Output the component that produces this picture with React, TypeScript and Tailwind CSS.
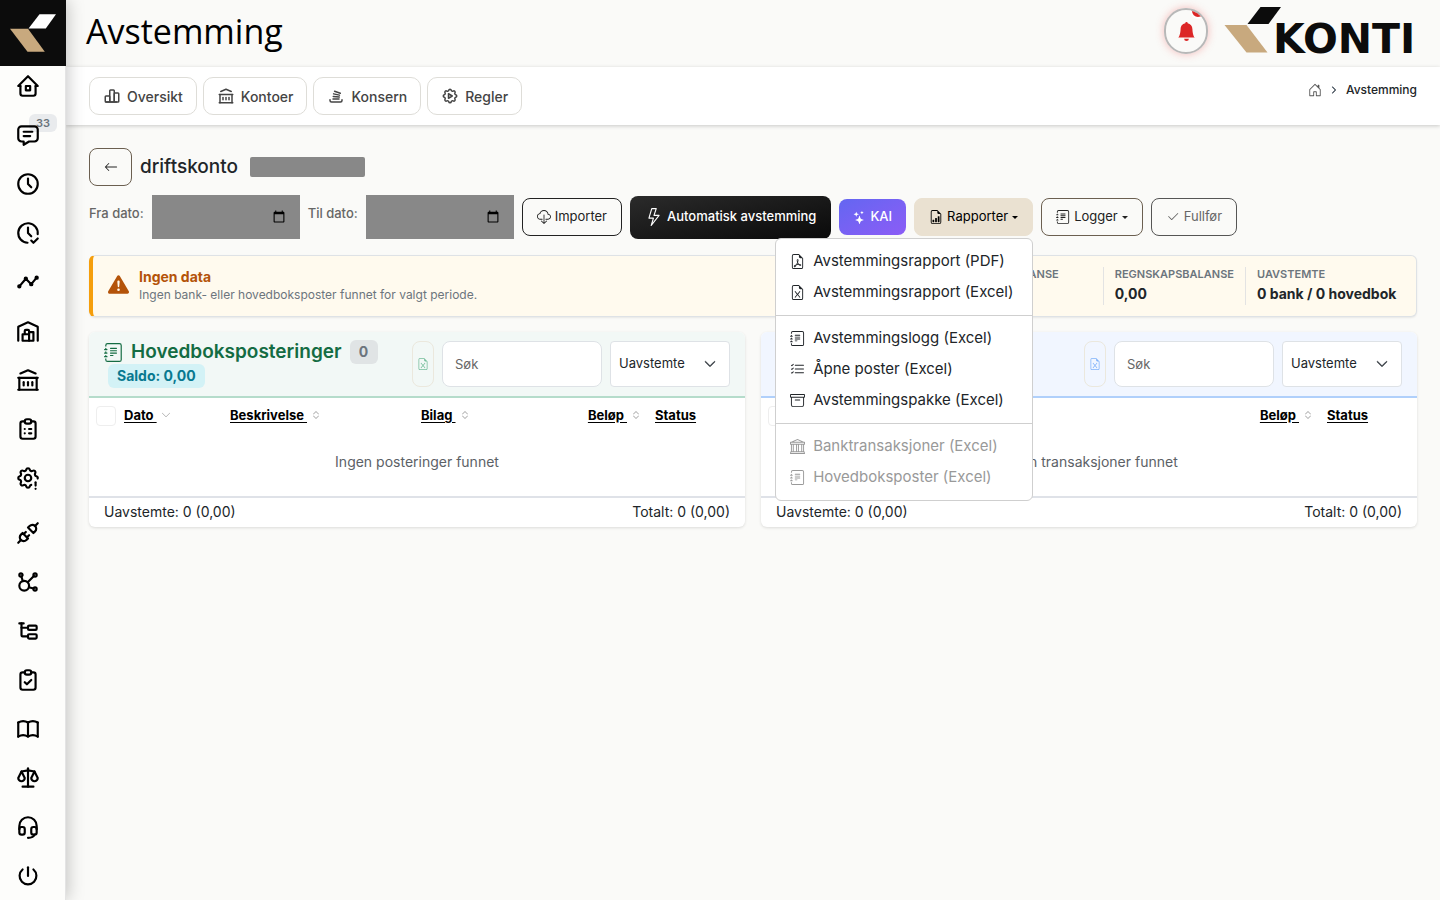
import type { ReactNode } from "react";
import type { IconType } from "react-icons";
import {
  BsArchive,
  BsArrowLeft,
  BsBank,
  BsBellFill,
  BsCheck2,
  BsChevronDown,
  BsChevronExpand,
  BsCloudDownload,
  BsExclamationTriangleFill,
  BsFileEarmarkBarGraph,
  BsFileEarmarkExcel,
  BsFileEarmarkPdf,
  BsHouseDoor,
  BsJournalText,
  BsLightning,
  BsListCheck,
  BsStars,
} from "react-icons/bs";
import {
  TbAffiliate,
  TbBook,
  TbBrandStackoverflow,
  TbBuildingBank,
  TbBuildingWarehouse,
  TbChartBar,
  TbClipboardCheck,
  TbClipboardList,
  TbClock,
  TbClockCheck,
  TbHeadset,
  TbHome2,
  TbMessage,
  TbPlugConnected,
  TbPower,
  TbScale,
  TbSettingsAutomation,
  TbSettingsExclamation,
  TbSubtask,
  TbTimeline,
} from "react-icons/tb";

interface NavItem {
  label: string;
  icon: IconType;
  badge?: number;
}

const mainNav: NavItem[] = [
  { label: "Hjem", icon: TbHome2 },
  { label: "Meldinger", icon: TbMessage, badge: 33 },
  { label: "Timer", icon: TbClock },
  { label: "Godkjenning", icon: TbClockCheck },
  { label: "Tidslinje", icon: TbTimeline },
  { label: "Lager", icon: TbBuildingWarehouse },
  { label: "Bank", icon: TbBuildingBank },
  { label: "Oppgaver", icon: TbClipboardList },
  { label: "Innstillinger", icon: TbSettingsExclamation },
];

const toolNav: NavItem[] = [
  { label: "Integrasjoner", icon: TbPlugConnected },
  { label: "Nettverk", icon: TbAffiliate },
  { label: "Struktur", icon: TbSubtask },
  { label: "Kontroll", icon: TbClipboardCheck },
  { label: "Bok", icon: TbBook },
  { label: "Juridisk", icon: TbScale },
  { label: "Support", icon: TbHeadset },
  { label: "Logg ut", icon: TbPower },
];

const tabs: NavItem[] = [
  { label: "Oversikt", icon: TbChartBar },
  { label: "Kontoer", icon: TbBuildingBank },
  { label: "Konsern", icon: TbBrandStackoverflow },
  { label: "Regler", icon: TbSettingsAutomation },
];

const reportMenu: { label: string; icon: IconType; disabled?: boolean }[][] = [
  [
    { label: "Avstemmingsrapport (PDF)", icon: BsFileEarmarkPdf },
    { label: "Avstemmingsrapport (Excel)", icon: BsFileEarmarkExcel },
  ],
  [
    { label: "Avstemmingslogg (Excel)", icon: BsJournalText },
    { label: "Åpne poster (Excel)", icon: BsListCheck },
    { label: "Avstemmingspakke (Excel)", icon: BsArchive },
  ],
  [
    { label: "Banktransaksjoner (Excel)", icon: BsBank, disabled: true },
    { label: "Hovedboksposter (Excel)", icon: BsJournalText, disabled: true },
  ],
];

function NavLinks({ items }: { items: NavItem[] }) {
  return (
    <ul>
      {items.map(({ label, icon: Icon, badge }) => (
        <li key={label}>
          <a href="#" aria-label={label} className="relative flex h-[49px] w-14 items-center justify-center text-black">
            {badge && (
              <span className="absolute left-[29px] top-1 flex h-[18px] w-7 items-center justify-center rounded-md bg-[#e9ebed] text-[11px] font-semibold text-[#6c757d]">
                {badge}
              </span>
            )}
            <Icon size={26} className="relative" />
          </a>
        </li>
      ))}
    </ul>
  );
}

function Sidebar() {
  return (
    <aside className="relative z-20 w-[66px] shrink-0 border-r border-[#e4e4e4] bg-[#fdfdfb] shadow-[2px_0_16px_rgba(0,0,0,0.22)]">
      <a href="#" aria-label="Konti" className="block h-[66px] w-[66px] bg-[#0c0c0c]">
        <svg viewBox="0 0 66 66" className="h-full w-full">
          <polygon points="28.5,28.5 39.5,14.3 56,14.3 45.8,28.5" fill="#fff" />
          <polygon points="10,28.7 28,28.7 44.8,51.8 27.5,51.8" fill="#c8a97e" />
        </svg>
      </a>
      <nav className="-mt-[5px] flex flex-col gap-[6px]">
        <NavLinks items={mainNav} />
        <NavLinks items={toolNav} />
      </nav>
    </aside>
  );
}

function Header() {
  return (
    <header className="flex h-[67px] items-center justify-between pl-5 pr-[14px]">
      <h1 className="pb-[6px] font-['Open_Sans'] text-[34px] leading-none text-black">Avstemming</h1>
      <div className="flex items-center gap-4">
        <button
          type="button"
          aria-label="Varsler"
          className="relative mb-[5px] flex h-[46px] w-11 items-center justify-center overflow-hidden rounded-full border-2 border-[#b8b8b8] shadow-[0_0_8px_rgba(239,68,68,0.35)]"
        >
          <BsBellFill size={19} className="text-[#dc2626]" />
          <span className="absolute -top-[7px] right-0 h-4 w-4 rounded-full border-2 border-white bg-[#dc2626]" />
        </button>
        <svg width="202" height="66" viewBox="0 0 202 66" role="img" aria-label="Konti">
          <polygon points="23.5,23 36.5,6 57,6 44.5,23" fill="#0c0c0c" />
          <polygon points="0.5,24 22.5,24 43.5,51.5 22.5,51.5" fill="#c8a97e" />
          <text x="49" y="52" fontSize="41" className="font-['DejaVu_Sans'] font-bold" fill="#0c0c0c">
            KONTI
          </text>
        </svg>
      </div>
    </header>
  );
}

function TabBar() {
  return (
    <div className="relative z-10 flex h-[58px] items-start justify-between bg-white px-[23px] pt-[10px] shadow-[0_1px_4px_rgba(0,0,0,0.2)]">
      <nav className="flex gap-[6px]">
        {tabs.map(({ label, icon: Icon }) => (
          <a
            key={label}
            href="#"
            className="flex h-[38px] items-center gap-[6px] rounded-[10px] border border-[#deddd8] px-[13px] text-[14px] font-medium text-[#444]"
          >
            <Icon size={18} />
            {label}
          </a>
        ))}
      </nav>
      <nav aria-label="Brødsmule" className="flex items-center gap-2 pt-1 text-[12px] font-medium text-[#212529]">
        <a href="#" aria-label="Hjem">
          <BsHouseDoor size={14} className="text-[#555]" />
        </a>
        <BsChevronDown size={8} stroke="currentColor" strokeWidth={2} className="-rotate-90 text-[#5c6670]" />
        <span>Avstemming</span>
      </nav>
    </div>
  );
}

function DateField({ id, label }: { id: string; label: string }) {
  return (
    <div className="flex items-center gap-2">
      <label htmlFor={id} className="pb-[6px] text-[13px] font-medium text-[#666]">
        {label}
      </label>
      <input id={id} type="date" className="h-11 w-[148px] bg-[#888] px-3 text-[14px] text-transparent" />
    </div>
  );
}

function Caret() {
  return <span className="inline-block border-x-[3px] border-t-[3px] border-x-transparent border-t-current" />;
}

function ReportMenu() {
  return (
    <div className="absolute right-0 top-full z-30 mt-[2px] w-[258px] rounded-md border border-[#cfcfcf] bg-white py-[7px]">
      {reportMenu.map((group, i) => (
        <ul key={i} className={i > 0 ? "mt-[7px] border-t border-[#cfcfcf] pt-[7px]" : ""}>
          {group.map(({ label, icon: Icon, disabled }) => (
            <li key={label}>
              <button
                type="button"
                disabled={disabled}
                className="flex h-[31px] w-full items-center gap-2 px-[14px] text-left text-[15px] text-[#212529] disabled:text-[#999]"
              >
                <Icon size={15} />
                {label}
              </button>
            </li>
          ))}
        </ul>
      ))}
    </div>
  );
}

const toolButton = "flex h-[38px] items-center gap-1 rounded-lg border px-[14px] text-[13px]";

function Toolbar() {
  return (
    <div className="flex items-center gap-2 pt-[9px]">
      <DateField id="from-date" label="Fra dato:" />
      <DateField id="to-date" label="Til dato:" />
      <button type="button" className={`${toolButton} border-[#222] text-[#222]`}>
        <BsCloudDownload size={14} />
        Importer
      </button>
      <button
        type="button"
        className="flex h-[43px] items-center gap-1 rounded-lg bg-linear-to-br from-[#2b2b2b] to-[#0a0a0a] px-[15px] text-[13px] font-medium text-white"
      >
        <BsLightning size={18} />
        Automatisk avstemming
      </button>
      <button
        type="button"
        className="flex h-9 items-center gap-1 rounded-lg bg-linear-to-br from-[#6366f1] to-[#8b5cf6] px-[14px] text-[13px] font-medium text-white"
      >
        <BsStars size={13} />
        KAI
      </button>
      <div className="relative">
        <button type="button" aria-expanded="true" className={`${toolButton} border-[#eae1d1] bg-[#eae1d1] text-black`}>
          <BsFileEarmarkBarGraph size={14} />
          Rapporter
          <Caret />
        </button>
        <ReportMenu />
      </div>
      <button type="button" className={`${toolButton} border-[#6b5f50] text-[#222]`}>
        <BsJournalText size={14} />
        Logger
        <Caret />
      </button>
      <button type="button" className={`${toolButton} border-[#555] text-[#666]`}>
        <BsCheck2 size={14} />
        Fullfør
      </button>
    </div>
  );
}

function Stat({ label, value }: { label: string; value: string }) {
  return (
    <div className="min-w-[138px] border-l border-[#e3e3e3] px-[11px] first:border-l-0 last:min-w-[156px] last:pr-0">
      <p className="text-[11px] font-semibold leading-[14px] text-[#6c757d]">{label}</p>
      <p className="mt-[2px] text-[14px] font-bold leading-[22px] text-[#212529]">{value}</p>
    </div>
  );
}

function Notice() {
  return (
    <section className="mt-4 flex h-[62px] items-center rounded-md border border-l-4 border-[#dee2e6] border-l-[#f59e0b] bg-[#fffaee] px-[15px] shadow-[0_1px_2px_rgba(0,0,0,0.08)]">
      <BsExclamationTriangleFill size={21} className="mb-1 text-[#b45309]" />
      <div className="ml-[10px] flex-1">
        <h2 className="text-[14px] font-bold leading-[18px] text-[#b45309]">Ingen data</h2>
        <p className="text-[12px] leading-[18px] text-[#6c757d]">Ingen bank- eller hovedboksposter funnet for valgt periode.</p>
      </div>
      <div className="flex">
        <Stat label="BANKBALANSE" value="0,00" />
        <Stat label="REGNSKAPSBALANSE" value="0,00" />
        <Stat label="UAVSTEMTE" value="0 bank / 0 hovedbok" />
      </div>
    </section>
  );
}

function SortLink({ children }: { children: ReactNode }) {
  return (
    <a href="#" className="underline underline-offset-2">
      {children}
    </a>
  );
}

function SortIcon() {
  return <BsChevronExpand size={10} className="ml-1 inline align-baseline text-[#999]" />;
}

interface PanelProps {
  id: string;
  title: string;
  icon: IconType;
  empty: string;
  tone: "green" | "blue";
  voucher?: boolean;
}

function Panel({ id, title, icon: Icon, empty, tone, voucher }: PanelProps) {
  const green = tone === "green";
  return (
    <section className="min-w-0 flex-1 overflow-hidden rounded-md bg-white shadow-[0_1px_3px_rgba(0,0,0,0.12)]">
      <div
        className={`flex h-[66px] items-center justify-between border-b-2 px-[15px] ${
          green ? "border-[#b5dccb] bg-[#f2f8f6]" : "border-[#b0d0fb] bg-[#f1f6ff]"
        }`}
      >
        <div>
          <h2 className={`flex items-center gap-2 text-[19px] font-semibold leading-6 ${green ? "text-[#146c43]" : "text-[#0a58ca]"}`}>
            <Icon size={19} />
            {title}
            <span className="flex h-6 w-7 items-center justify-center rounded-md bg-[#e0e4e5] text-[14px] font-bold text-[#6c757d]">
              0
            </span>
          </h2>
          <span className="ml-1 block w-fit rounded-md bg-[#d3f2f6] px-[9px] text-[14px] font-bold leading-6 text-[#087990]">
            Saldo: 0,00
          </span>
        </div>
        <div className="flex gap-2">
          <button
            type="button"
            aria-label={`Eksporter ${title}`}
            className="flex h-[46px] w-[22px] items-center justify-center rounded-lg border border-[#ebe8dd]"
          >
            <BsFileEarmarkExcel size={12} className={`shrink-0 ${green ? "text-[#74bd9a]" : "text-[#7fb2fa]"}`} />
          </button>
          <input
            type="text"
            aria-label="Søk"
            placeholder="Søk"
            className="h-[46px] w-40 rounded-lg border border-[#dee2e6] bg-white px-3 text-[13px] text-[#212529] placeholder:text-[#666]"
          />
          <div className="relative">
            <select
              aria-label="Filter"
              className="h-[46px] w-[120px] appearance-none rounded-sm border border-[#dee2e6] bg-white px-2 text-[13px] text-[#212529]"
            >
              <option>Uavstemte</option>
            </select>
            <BsChevronDown
              size={12}
              stroke="currentColor"
              strokeWidth={1}
              className="pointer-events-none absolute right-[14px] top-[17px] text-[#343a40]"
            />
          </div>
        </div>
      </div>
      <table className="w-full table-fixed text-left text-[13px] text-black">
        <thead>
          <tr className="h-[35px] whitespace-nowrap">
            <th className="w-[35px] pl-[7px]">
              <input
                id={`${id}-all`}
                type="checkbox"
                aria-label="Velg alle"
                className="block h-5 w-5 appearance-none rounded-sm border border-[#eee] bg-white"
              />
            </th>
            <th className="w-[106px]">
              <SortLink>Dato&nbsp;</SortLink>
              <BsChevronDown size={10} className="ml-1 inline align-baseline text-[#999]" />
            </th>
            <th className={voucher ? "w-[191px]" : ""}>
              <SortLink>Beskrivelse&nbsp;</SortLink>
              <SortIcon />
            </th>
            {voucher && (
              <th>
                <SortLink>Bilag&nbsp;</SortLink>
                <SortIcon />
              </th>
            )}
            <th className="w-[75px] pr-[14px] text-right">
              <SortLink>Beløp&nbsp;</SortLink>
              <SortIcon />
            </th>
            <th className="w-[90px]">
              <SortLink>Status</SortLink>
            </th>
          </tr>
        </thead>
        <tbody>
          <tr>
            <td colSpan={voucher ? 6 : 5} className="h-[63px] pb-[6px] text-center text-[14px] text-[#5c6166]">
              {empty}
            </td>
          </tr>
        </tbody>
      </table>
      <div className="flex items-center justify-between border-t-2 border-[#dfe2e8] px-[15px] pb-[1px] text-[14px] leading-7 text-[#212529]">
        <span>Uavstemte: 0 (0,00)</span>
        <span>Totalt: 0 (0,00)</span>
      </div>
    </section>
  );
}

export default function App() {
  return (
    <div className="flex min-h-screen bg-[#fafaf8] font-[Inter,sans-serif]">
      <Sidebar />
      <div className="min-w-0 flex-1">
        <Header />
        <TabBar />
        <main className="px-[23px] pt-[23px]">
          <div className="flex items-center">
            <button
              type="button"
              aria-label="Tilbake"
              className="flex h-[38px] w-[43px] items-center justify-center rounded-lg border border-[#6b5f50] text-[#222]"
            >
              <BsArrowLeft size={14} />
            </button>
            <h2 className="ml-2 text-[19px] font-medium text-[#212529]">driftskonto</h2>
            <span className="ml-3 h-5 w-[115px] rounded-xs bg-[#888]" />
          </div>
          <Toolbar />
          <Notice />
          <div className="mt-[15px] flex gap-4">
            <Panel id="ledger" title="Hovedboksposteringer" icon={BsJournalText} empty="Ingen posteringer funnet" tone="green" voucher />
            <Panel id="bank" title="Banktransaksjoner" icon={BsBank} empty="Ingen transaksjoner funnet" tone="blue" />
          </div>
        </main>
      </div>
    </div>
  );
}
